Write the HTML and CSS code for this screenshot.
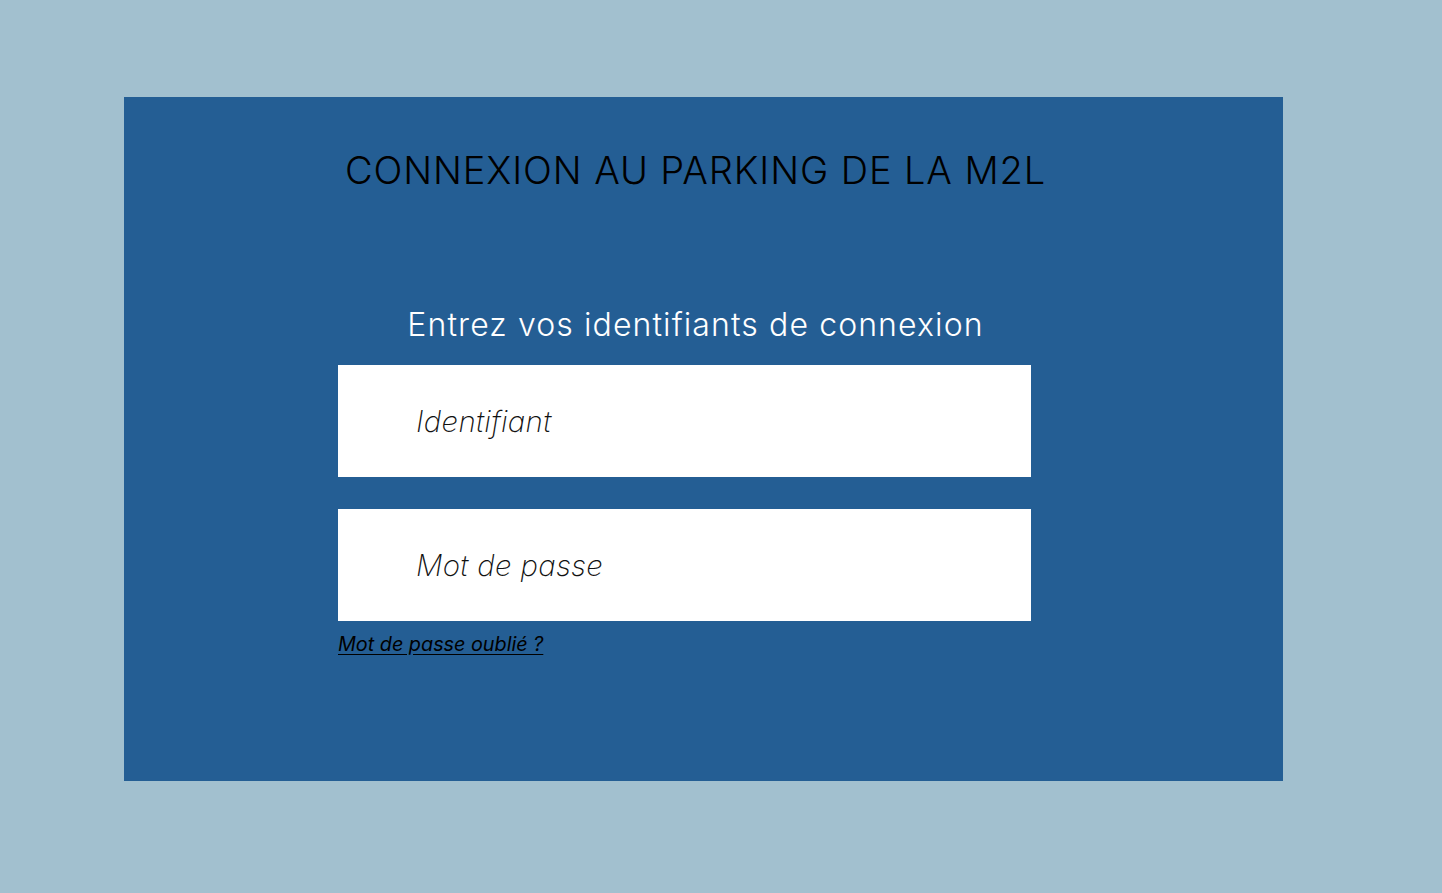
FILE: index.html
```html
<!DOCTYPE html>
<html lang="fr">
<head>
<meta charset="utf-8">
<title>Connexion au parking de la M2L</title>
<link rel="stylesheet" href="styles.css">
</head>
<body>
<main class="panel">
  <div class="column">
    <h1 class="title">CONNEXION AU PARKING DE LA M2L</h1>
    <h2 class="subtitle">Entrez vos identifiants de connexion</h2>
    <form class="form">
      <input class="field" type="text" placeholder="Identifiant">
      <input class="field field-pw" type="password" placeholder="Mot de passe">
      <a class="forgot" href="#">Mot de passe oublié ?</a>
    </form>
  </div>
</main>
</body>
</html>
```
FILE: styles.css
```css
html, body {
  margin: 0;
  padding: 0;
}
body {
  background: #a2c0cf;
  width: 1442px;
  height: 893px;
  padding-top: 97px;
  padding-left: 124px;
  box-sizing: border-box;
  font-family: "Inter", "Roboto", sans-serif;
}
.panel {
  width: 1159px;
  height: 684px;
  background: #245e94;
  box-sizing: border-box;
  padding-left: 214px;
}
.column {
  width: 715px;
  display: flex;
  flex-direction: column;
}
.title {
  margin: 0;
  padding-top: 50px;
  text-align: center;
  font-weight: 300;
  font-size: 38px;
  line-height: 46px;
  letter-spacing: 0.9px;
  color: #000;
}
.subtitle {
  margin: 0;
  margin-top: 112px;
  text-align: center;
  font-weight: 300;
  font-size: 32px;
  line-height: 40px;
  letter-spacing: 1.1px;
  color: #fff;
}
.form {
  display: flex;
  flex-direction: column;
  align-items: flex-start;
  margin-top: 20px;
}
.field {
  width: 693px;
  height: 112px;
  border: none;
  outline: none;
  background: #fff;
  box-sizing: border-box;
  padding: 0 0 0 78px;
  font-family: "Inter", sans-serif;
  font-style: italic;
  font-weight: 200;
  font-size: 29.5px;
  letter-spacing: 0.3px;
  color: #000;
}
.field::placeholder {
  color: #111;
  opacity: 1;
}
.field-pw {
  margin-top: 32px;
}
.forgot {
  margin-top: 11px;
  font-family: "Inter", sans-serif;
  font-style: italic;
  font-size: 19.8px;
  color: #000;
  text-decoration: underline;
  text-underline-offset: 3px;
}
```
